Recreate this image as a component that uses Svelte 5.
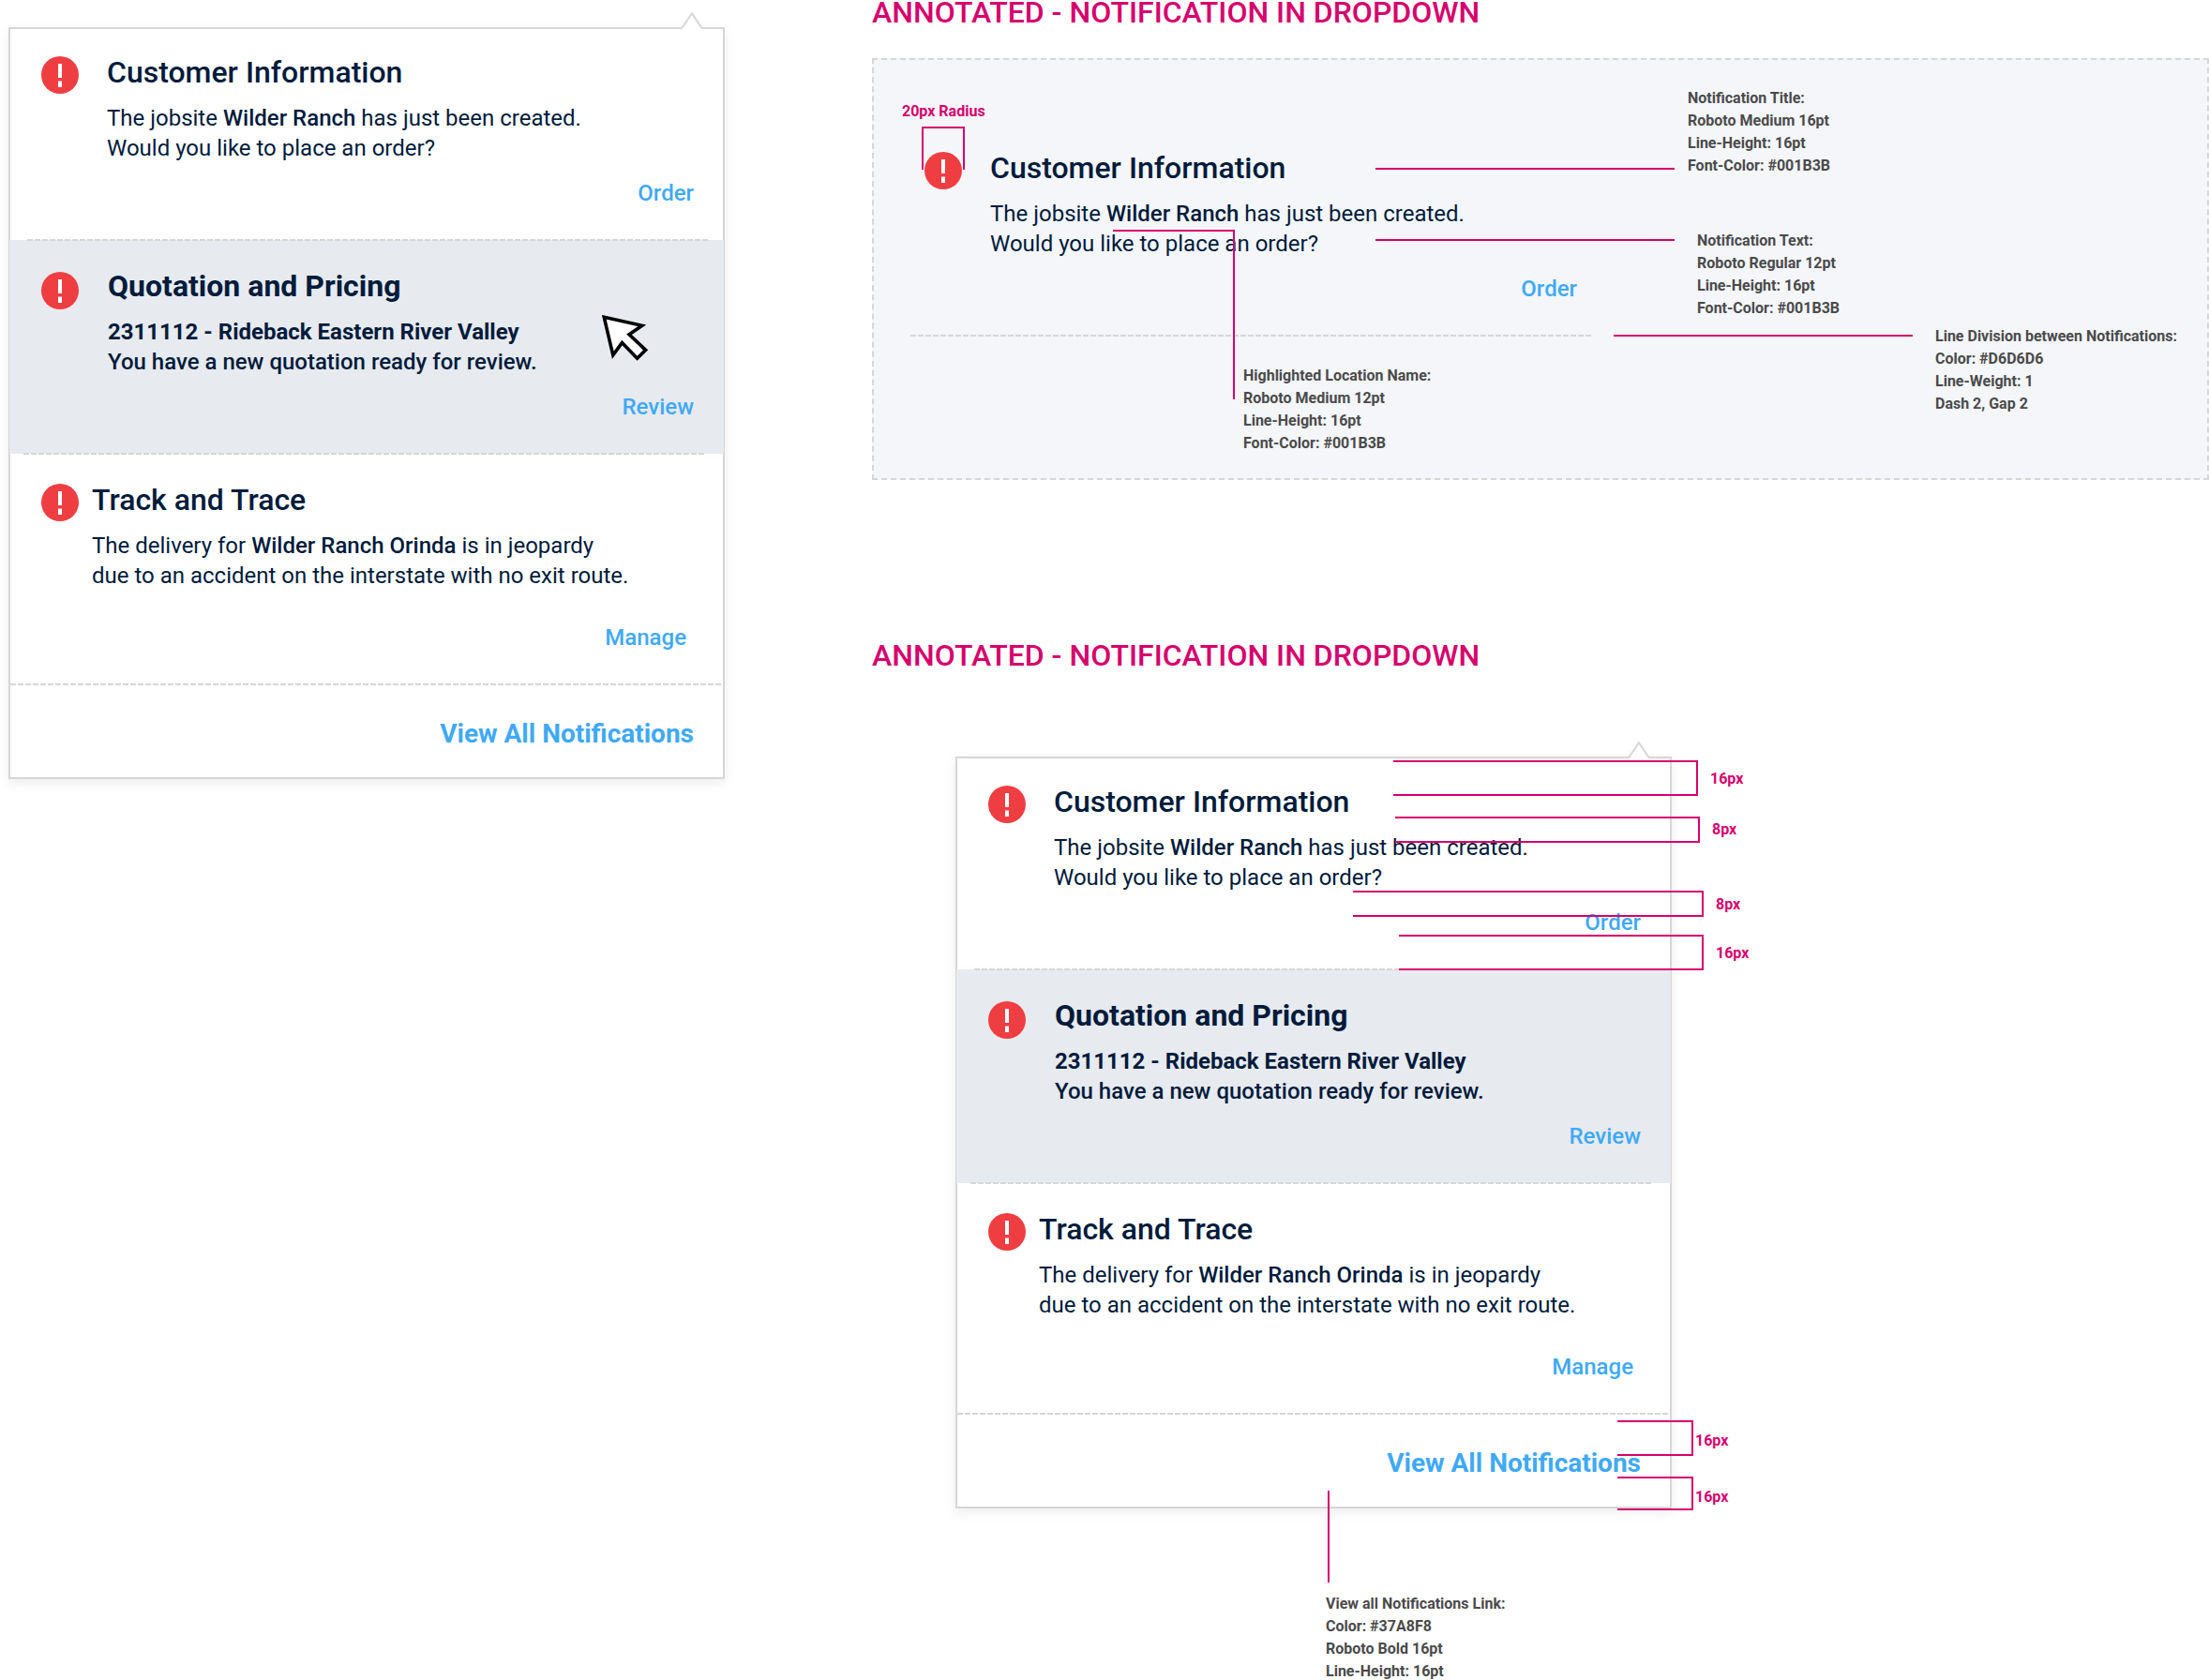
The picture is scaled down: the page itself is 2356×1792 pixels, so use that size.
<script>
  const customer = {
    title: 'Customer Information',
    lines: [
      [{ t: 'The jobsite ' }, { t: 'Wilder Ranch', strong: true }, { t: ' has just been created.' }],
      [{ t: 'Would you like to place an order?' }],
    ],
    action: 'Order',
    kind: 'plain',
  };

  const notifications = [
    customer,
    {
      title: 'Quotation and Pricing',
      lines: [
        [{ t: '2311112 - Rideback Eastern River Valley', strong: true }],
        [{ t: 'You have a new quotation ready for review.' }],
      ],
      action: 'Review',
      kind: 'active',
    },
    {
      title: 'Track and Trace',
      lines: [
        [{ t: 'The delivery for ' }, { t: 'Wilder Ranch Orinda', strong: true }, { t: ' is in jeopardy' }],
        [{ t: 'due to an accident on the interstate with no exit route.' }],
      ],
      action: 'Manage',
      kind: 'compact',
    },
  ];

  // Callouts and leader lines, in coordinates of the figure they annotate.
  const panelNotes = [
    { x: 870, y: 31, lines: ['Notification Title:', 'Roboto Medium 16pt', 'Line-Height: 16pt', 'Font-Color: #001B3B'] },
    { x: 880, y: 183, lines: ['Notification Text:', 'Roboto Regular 12pt', 'Line-Height: 16pt', 'Font-Color: #001B3B'] },
    { x: 1134, y: 285, lines: ['Line Division between Notifications:', 'Color: #D6D6D6', 'Line-Weight: 1', 'Dash 2, Gap 2'] },
    { x: 396, y: 327, lines: ['Highlighted Location Name:', 'Roboto Medium 12pt', 'Line-Height: 16pt', 'Font-Color: #001B3B'] },
  ];
  const panelMeasures = [{ x: 32, y: 45, text: '20px Radius' }];
  const panelLines = [
    'M54 119V74H98V119',
    'M537 118H856',
    'M537 194H856',
    'M257 184H386V364',
    'M791 296H1110',
  ];

  const cardNotes = [
    { x: 484, y: 892, lines: ['View all Notifications Link:', 'Color: #37A8F8', 'Roboto Bold 16pt', 'Line-Height: 16pt'] },
  ];
  const cardMeasures = [
    { x: 894, y: 12, text: '16px' },
    { x: 896, y: 66, text: '8px' },
    { x: 900, y: 146, text: '8px' },
    { x: 900, y: 198, text: '16px' },
    { x: 878, y: 718, text: '16px' },
    { x: 878, y: 778, text: '16px' },
  ];
  const cardLines = [
    'M556 5H880V41H556',
    'M558 65H882V91H558',
    'M513 144H886V170H513',
    'M562 191H886V227H562',
    'M795 709H875V745H795',
    'M795 769H875V803H795',
    'M487 783V881',
  ];
</script>

{#snippet notification(item)}
  <article class="item {item.kind}">
    <svg class="alert" viewBox="0 0 40 40" aria-hidden="true">
      <circle cx="20" cy="20" r="20" fill="#ef3e42" />
      <path d="M18 8h4v15h-4zM18 26.4h4V33h-4z" fill="#fff" />
    </svg>
    <div class="body">
      <h3>{item.title}</h3>
      <p>
        {#each item.lines as line}
          <span class="line">{#each line as part}{#if part.strong}<strong>{part.t}</strong>{:else}{part.t}{/if}{/each}</span>
        {/each}
      </p>
      <a class="action" href="#{item.action.toLowerCase()}">{item.action}</a>
    </div>
  </article>
  <hr class={item.kind} />
{/snippet}

{#snippet dropdown(withCursor)}
  <section class="card">
    <svg class="pointer" viewBox="0 0 24 20" aria-hidden="true">
      <path d="M1 17.5L12 2L22.5 17.5V20H1z" fill="#fff" />
      <path d="M0 18H1.2L12 2.2L22.5 18H24" fill="none" stroke="#d6d6d6" stroke-width="2" />
    </svg>
    {#each notifications as item}
      {@render notification(item)}
    {/each}
    <footer><a href="#all">View All Notifications</a></footer>
    {#if withCursor}
      <svg class="cursor" viewBox="0 0 56 56" aria-hidden="true">
        <path
          d="M4.3 4.3L44.8 13.3L31 22.8L48.6 39.4L39.6 48.3L23.4 31.6L13.8 44.8z"
          fill="#fff" stroke="#000" stroke-width="3.6" stroke-miterlimit="4" />
      </svg>
    {/if}
  </section>
{/snippet}

{#snippet annotations(lines, measures, notes)}
  <svg class="leaders" aria-hidden="true">
    {#each lines as d}<path {d} />{/each}
  </svg>
  {#each measures as m}
    <span class="callout measure" style="left:{m.x}px;top:{m.y}px">{m.text}</span>
  {/each}
  {#each notes as n}
    <div class="callout" style="left:{n.x}px;top:{n.y}px">
      {#each n.lines as l}<div>{l}</div>{/each}
    </div>
  {/each}
{/snippet}

<main>
  <div class="preview">{@render dropdown(true)}</div>
  <div class="specs">
    <h2>ANNOTATED - NOTIFICATION IN DROPDOWN</h2>
    <figure class="panel-figure">
      <div class="panel">
        <div class="sample">{@render notification(customer)}</div>
      </div>
      {@render annotations(panelLines, panelMeasures, panelNotes)}
    </figure>
    <h2>ANNOTATED - NOTIFICATION IN DROPDOWN</h2>
    <figure class="card-figure">
      {@render dropdown(false)}
      {@render annotations(cardLines, cardMeasures, cardNotes)}
    </figure>
  </div>
</main>

<style>
  :global(body) {
    margin: 0;
    background: #fff;
  }
  main {
    display: grid;
    grid-template-columns: 921px minmax(0, 1fr);
    padding-left: 9px;
    min-height: 100vh;
    box-sizing: border-box;
    overflow: hidden;
    font-family: Roboto, 'Liberation Sans', sans-serif;
    color: #001b3b;
  }
  h2, h3, p, figure {
    margin: 0;
  }
  a {
    color: #3fa9f5;
    text-decoration: none;
  }
  .preview {
    padding-top: 29px;
  }
  h2 {
    font-size: 32px;
    line-height: 26px;
    font-weight: 500;
    color: #d6006d;
  }
  figure {
    position: relative;
  }
  .panel-figure {
    margin: 36px 0 174px;
  }
  .panel {
    box-sizing: border-box;
    min-height: 450px;
    padding: 69px 0 0 21px;
    border: 2px dashed #d6d6d6;
    background: #f4f6fa;
  }
  .sample {
    max-width: 760px;
  }
  .card-figure {
    margin-top: 95px;
    padding-left: 89px;
  }

  .card {
    position: relative;
    box-sizing: border-box;
    max-width: 764px;
    border: 2px solid #d6d6d6;
    background: #fff;
    box-shadow: 0 4px 12px rgba(0, 0, 0, 0.08);
  }
  .pointer {
    position: absolute;
    top: -19px;
    right: 21px;
    width: 24px;
    height: 20px;
  }
  .cursor {
    position: absolute;
    top: 303px;
    right: 75px;
    width: 56px;
    height: 56px;
  }

  .item {
    display: flex;
    gap: 30px;
    padding: 30px 31px 33px 33px;
  }
  .alert {
    flex: none;
    width: 40px;
    height: 40px;
    margin-top: -1px;
  }
  .body {
    flex: 1;
    display: flex;
    flex-direction: column;
  }
  h3 {
    font-size: 32px;
    line-height: 32px;
    font-weight: 500;
  }
  p {
    margin: 17px 0 16px;
    font-size: 24px;
    line-height: 32px;
  }
  .line {
    display: block;
  }
  strong {
    font-weight: 500;
  }
  .action {
    align-self: flex-end;
    font-size: 24px;
    line-height: 32px;
    font-weight: 500;
  }
  .item.active {
    gap: 31px;
    margin: -1px;
    padding: 33px 32px 34px 34px;
    background: #e7eaef;
  }
  .item.active .alert {
    margin-top: 1px;
  }
  .item.active h3,
  .item.active strong {
    font-weight: 700;
  }
  .item.active p {
    font-weight: 500;
  }
  .item.compact {
    gap: 14px;
    padding: 32px 39px 33px 33px;
  }
  .item.compact p {
    margin-bottom: 34px;
  }
  hr {
    position: relative;
    height: 2px;
    border: 0;
    margin: 0 16px 0 18px;
    background: repeating-linear-gradient(90deg, #d6d6d6 0 6px, transparent 6px 8px);
  }
  hr.active {
    margin: 0 20px 0 14px;
  }
  hr.compact {
    margin: 0;
  }
  footer {
    display: flex;
    justify-content: flex-end;
    padding: 36px 31px 30px;
    font-size: 28px;
    line-height: 32px;
    font-weight: 700;
  }

  .leaders {
    position: absolute;
    inset: 0;
    width: 100%;
    height: 100%;
    overflow: visible;
    fill: none;
    stroke: #d6006d;
    stroke-width: 2;
    pointer-events: none;
  }
  .callout {
    position: absolute;
    font-size: 16px;
    line-height: 24px;
    font-weight: 700;
    color: #4a4a4a;
    white-space: nowrap;
  }
  .measure {
    color: #d6006d;
  }
</style>
